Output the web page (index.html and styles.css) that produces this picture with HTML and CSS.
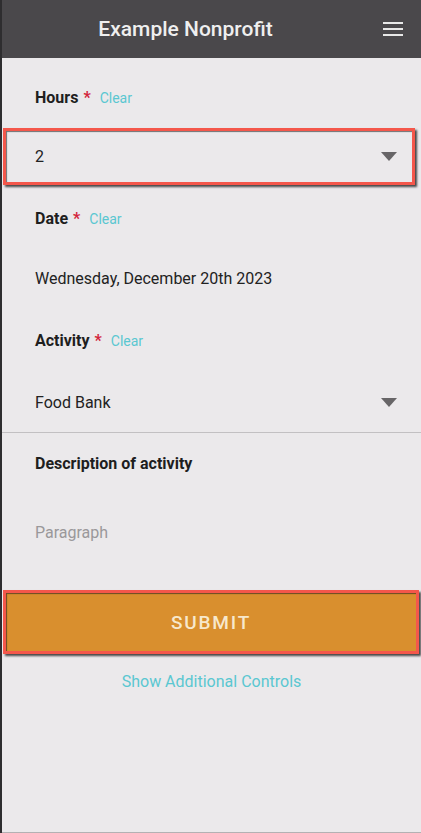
FILE: index.html
```html
<!DOCTYPE html>
<html lang="en">
<head>
    <meta charset="UTF-8">
    <meta name="viewport" content="width=device-width, initial-scale=1.0">
    <title>Example Nonprofit</title>
    <link rel="stylesheet" href="styles.css">
</head>
<body>
    <div class="page">
        <header class="topbar">
            <h1 class="title">Example Nonprofit</h1>
            <button class="menu-btn" aria-label="Menu">
                <svg width="20" height="14" viewBox="0 0 20 14">
                    <rect x="0" y="0" width="20" height="2" fill="#e8e8e8"/>
                    <rect x="0" y="6" width="20" height="2" fill="#e8e8e8"/>
                    <rect x="0" y="12" width="20" height="2" fill="#e8e8e8"/>
                </svg>
            </button>
        </header>

        <form class="form">
            <!-- Hours -->
            <div class="field field-first">
                <div class="label-row">
                    <span class="label">Hours</span>
                    <span class="required">*</span>
                    <a class="clear" href="#">Clear</a>
                </div>
                <div class="control highlight">
                    <span class="value">2</span>
                    <svg class="caret" width="16" height="9" viewBox="0 0 16 9"><polygon points="0,0 16,0 8,9" fill="#676567"/></svg>
                </div>
            </div>

            <!-- Date -->
            <div class="field">
                <div class="label-row">
                    <span class="label">Date</span>
                    <span class="required">*</span>
                    <a class="clear" href="#">Clear</a>
                </div>
                <div class="control">
                    <span class="value">Wednesday, December 20th 2023</span>
                </div>
            </div>

            <!-- Activity -->
            <div class="field">
                <div class="label-row">
                    <span class="label">Activity</span>
                    <span class="required">*</span>
                    <a class="clear" href="#">Clear</a>
                </div>
                <div class="control control-underline">
                    <span class="value">Food Bank</span>
                    <svg class="caret" width="16" height="9" viewBox="0 0 16 9"><polygon points="0,0 16,0 8,9" fill="#676567"/></svg>
                </div>
            </div>

            <!-- Description -->
            <div class="field field-desc">
                <div class="label-row">
                    <span class="label">Description of activity</span>
                </div>
                <div class="control control-text">
                    <span class="placeholder">Paragraph</span>
                </div>
            </div>

            <button type="button" class="submit">SUBMIT</button>
            <a class="more" href="#">Show Additional Controls</a>
        </form>
    </div>
</body>
</html>
```

FILE: styles.css
```css
* {
    box-sizing: border-box;
}
body {
    margin: 0;
    font-family: Roboto, "Liberation Sans", Arial, sans-serif;
    background-color: #2e2d2f;
    color: #222;
}
.page {
    height: 833px;
    margin-left: 2px;
    background-color: #ebe9eb;
    border-bottom: 1px solid #b3b1b3;
}
/* Top bar */
.topbar {
    height: 58px;
    display: flex;
    align-items: center;
    background-color: #4a484b;
}
.title {
    flex: 1;
    margin: 0;
    text-align: center;
    font-size: 21px;
    font-weight: 500;
    color: #efefef;
}
.menu-btn {
    width: 52px;
    height: 58px;
    padding: 0 18px 0 0;
    border: none;
    background: none;
    display: flex;
    align-items: center;
    justify-content: flex-end;
}
/* Form fields */
.form {
    padding-top: 6px;
}
.field {
    padding-top: 24px;
}
.field-desc {
    padding-top: 21px;
}
.label-row {
    height: 20px;
    line-height: 20px;
    padding-left: 33px;
    display: flex;
    align-items: baseline;
}
.label {
    font-size: 16px;
    font-weight: bold;
    color: #1e1e1e;
}
.required {
    margin-left: 5px;
    font-size: 16px;
    font-weight: bold;
    color: #d3253c;
}
.clear {
    margin-left: 9px;
    font-size: 14px;
    color: #5ac7d1;
    text-decoration: none;
}
.control {
    margin-top: 21px;
    height: 57px;
    padding: 0 24px 0 33px;
    display: flex;
    align-items: center;
    justify-content: space-between;
    font-size: 16px;
}
.control-underline {
    height: 61px;
    border-bottom: 1px solid #c2c0c2;
}
.control-text {
    height: 74px;
}
.value {
    color: #222;
}
.placeholder {
    color: #9a989a;
}
/* Red annotation outline */
.highlight {
    margin: 20px 6px 0 1px;
    padding: 0 15px 0 29px;
    border: 3px solid #f4574b;
    box-shadow: 2px 2px 2px rgba(30, 30, 30, 0.8), inset 1px 1px 1px rgba(30, 30, 30, 0.6);
}
.submit {
    display: block;
    width: 416px;
    height: 64px;
    margin: 21px 0 0 1px;
    border: 3px solid #f4574b;
    background-color: #d98f2e;
    box-shadow: 2px 2px 2px rgba(30, 30, 30, 0.8), inset 1px 1px 1px rgba(30, 30, 30, 0.6);
    color: #f7e8cc;
    font-family: Roboto, "Liberation Sans", Arial, sans-serif;
    font-size: 19px;
    font-weight: 500;
    letter-spacing: 1.8px;
}
.more {
    display: block;
    margin-top: 18px;
    line-height: 20px;
    text-align: center;
    font-size: 16px;
    color: #5ac7d1;
    text-decoration: none;
}
```
